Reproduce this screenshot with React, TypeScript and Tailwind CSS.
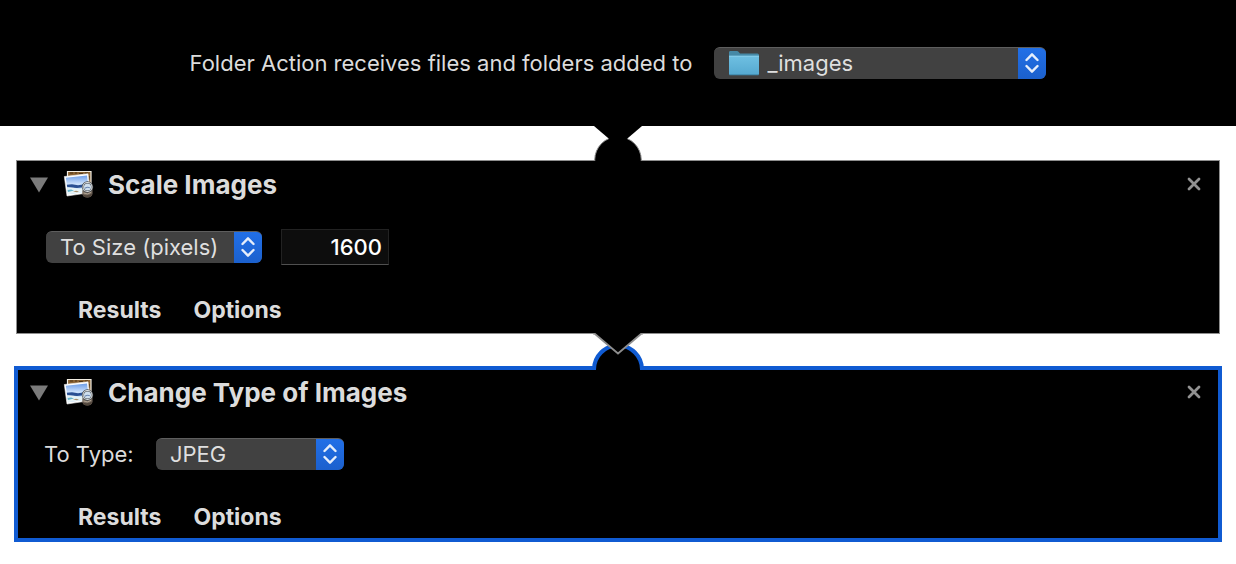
import { useId, useState } from "react";
import type { ReactNode } from "react";

function PopUp({
  id,
  label,
  options,
  className,
  selectClass = "pl-3.5",
  icon,
}: {
  id?: string;
  label?: string;
  options: string[];
  className: string;
  selectClass?: string;
  icon?: ReactNode;
}) {
  return (
    <div
      className={`relative flex h-8 shrink-0 overflow-hidden rounded-md border-t border-[#5e5e5e] bg-[#414141] ${className}`}
    >
      {icon}
      <select
        id={id}
        aria-label={label}
        className={`w-full cursor-default appearance-none bg-transparent pr-8 pb-0.5 text-[22px] leading-7 text-[#dfdfdf] outline-none ${selectClass}`}
      >
        {options.map((o) => (
          <option key={o}>{o}</option>
        ))}
      </select>
      <span className="pointer-events-none absolute -top-px right-0 flex h-8 w-7 items-center justify-center bg-linear-to-b from-[#2270e8] to-[#1b60cd]">
        <svg width="14" height="22" viewBox="0 0 14 22" fill="none" stroke="#e6eefb" strokeWidth="2.4" strokeLinecap="round" strokeLinejoin="round">
          <path d="M1.5 8 7 2.3 12.5 8M1.5 14 7 19.7 12.5 14" />
        </svg>
      </span>
    </div>
  );
}

function FolderIcon() {
  const g = useId();
  return (
    <svg className="pointer-events-none absolute top-[3px] left-3.5" width="32" height="26" viewBox="0 0 32 26">
      <defs>
        <linearGradient id={g} x1="0" y1="0" x2="0" y2="1">
          <stop offset="0" stopColor="#6fc0e2" />
          <stop offset="1" stopColor="#55a9d0" />
        </linearGradient>
      </defs>
      <path d="M1 23V1.400Q1 0 2.400 0H9q1 0 1.700 .9L12 2.600h17.500Q31 2.600 31 4.100V23z" fill="#4689a6" />
      <path d="M1 4.800H31V22.800q0 1.200-1.200 1.200H2.200Q1 24 1 22.800z" fill={`url(#${g})`} />
      <path d="M1 5.300H31" stroke="#86cdea" />
      <path d="M1.500 23.800H30.500" stroke="#3f86a8" />
    </svg>
  );
}

function PreviewIcon() {
  const g = useId();
  return (
    <svg width="32" height="30" viewBox="0 0 32 30" className="shrink-0">
      <defs>
        <linearGradient id={g} x1="0" y1="0" x2="0" y2="1">
          <stop offset="0" stopColor="#6b9ce8" />
          <stop offset="0.45" stopColor="#cbe0fb" />
          <stop offset="1" stopColor="#a9d0f2" />
        </linearGradient>
      </defs>
      <path d="M4.500 1.500H28V20H4.500z" fill="#8a6232" stroke="#f3eee4" strokeWidth="1.200" />
      <path d="M7 3h3M12 3h2M16 3.500h4M22 3h3M26 6v4" stroke="#4e3414" strokeWidth="1.200" />
      <path d="M1.300 6.500 25 3.800 27.500 22.600 4 26z" fill="#fff" stroke="#eee" strokeWidth=".6" />
      <path d="M2.800 7.800 24 5.400 26 21.200 5 24.300z" fill={`url(#${g})`} />
      <path d="M3.800 14.800 9 14.300l6 1 9.800-1.600.4 3L14 18 4.300 17.300z" fill="#2a4f92" />
      <path d="M4.300 17.300 10 17.800l7 1 4-1 1 4L5 24.300z" fill="#e6f2f5" />
      <path d="M4.600 20 8 19.400l3 1-6 1.500z" fill="#66b5cb" />
      <path d="M10 21.500l3-.8 3 .8-2 .7z" fill="#a98f6c" />
      <path d="M19.300 20q5 4 10.200-1v5q-1 3.600-5.200 3.600T19.300 24z" fill="#776b60" />
      <path d="M19.500 24q4.500 3 9.700-.8-.6 4.300-4.700 4.300t-5-3.500z" fill="#51463c" />
      <circle cx="24.500" cy="17" r="4.600" fill="#cfdfee" stroke="#43494e" strokeWidth="2.200" />
      <circle cx="24.500" cy="17" r="4.500" fill="none" stroke="#dfe1e2" strokeWidth="1.100" />
      <path d="M22 18.200q2.500-1.600 4.800-.4" stroke="#6a86b2" strokeWidth="1.100" fill="none" />
      <path d="M20.500 23q4 2 7.500-.6" stroke="#b8aa98" strokeWidth=".9" fill="none" />
    </svg>
  );
}

function Pointer({ outlined }: { outlined?: boolean }) {
  return (
    <svg
      className="pointer-events-none absolute top-full left-1/2 z-10 -translate-x-1/2"
      width="50"
      height="24"
      viewBox="0 0 50 24"
    >
      <path d="M1 0 25 20.500 49 0z" fill="#000" />
      {outlined && <path d="M0 .5H1.500L25 20.500 48.500 .5H50" fill="none" stroke="#8e8e8e" strokeWidth="1.800" />}
    </svg>
  );
}

function Bump({ selected }: { selected?: boolean }) {
  return (
    <svg
      className="pointer-events-none absolute bottom-full left-1/2 -translate-x-1/2"
      width="52"
      height="26"
      viewBox="0 0 52 26"
    >
      {selected ? (
        <circle cx="26" cy="25.500" r="24" fill="#000" stroke="#105bd2" strokeWidth="4" />
      ) : (
        <circle cx="26" cy="25" r="23.300" fill="#000" stroke="#8e8e8e" strokeWidth="1" />
      )}
    </svg>
  );
}

function ActionCard({ title, selected, children }: { title: string; selected?: boolean; children: ReactNode }) {
  const [open, setOpen] = useState(true);
  return (
    <section
      className={`relative bg-black ${
        selected ? "mx-3.5 mt-8 border-4 border-[#105bd2] pb-1.5" : "mx-4 mt-[34px] border border-[#8e8e8e] pb-2"
      }`}
    >
      <Bump selected={selected} />
      <header className={`flex items-center ${selected ? "h-[46px] pr-[17px] pl-3" : "h-12 pr-[18px] pl-[13px]"}`}>
        <button type="button" aria-label="Toggle details" aria-expanded={open} onClick={() => setOpen(!open)}>
          <svg width="18" height="16" viewBox="0 0 18 16" className={open ? "" : "-rotate-90"}>
            <path d="M0 .5H18L9 15.500z" fill="#7b7b7b" />
          </svg>
        </button>
        <span className="ml-[15px]">
          <PreviewIcon />
        </span>
        <h2 className="ml-[13px] flex-1 text-[26px] leading-8 font-bold">{title}</h2>
        <button type="button" aria-label={`Remove ${title}`} className="pb-0.5">
          <svg width="14" height="14" viewBox="0 0 14 14" stroke="#929292" strokeWidth="2.800" strokeLinecap="round">
            <path d="M2 2 12 12M12 2 2 12" />
          </svg>
        </button>
      </header>
      {open && (
        <>
          <div className="mt-5 flex h-9 items-center">{children}</div>
          <footer
            className={`mt-[30px] flex h-[30px] items-center gap-8 text-[23px] font-bold ${
              selected ? "pl-[60px]" : "pl-[61px]"
            }`}
          >
            <button type="button">Results</button>
            <button type="button">Options</button>
          </footer>
        </>
      )}
      {!selected && <Pointer outlined />}
    </section>
  );
}

export default function App() {
  return (
    <main className="min-h-screen bg-white pb-5 font-['Inter',sans-serif] text-[#dcdcdc]">
      <div className="relative flex h-[126px] items-center justify-center gap-[22px] bg-black">
        <label htmlFor="folder" className="text-[22px] leading-8">
          Folder Action receives files and folders added to
        </label>
        <PopUp
          id="folder"
          options={["_images", "Other…"]}
          className="w-[332px]"
          selectClass="pl-[53px]"
          icon={<FolderIcon />}
        />
        <Pointer />
      </div>

      <ActionCard title="Scale Images">
        <PopUp label="Scale mode" options={["To Size (pixels)", "By Percentage"]} className="ml-[29px] w-[216px]" />
        <input
          aria-label="Size"
          defaultValue="1600"
          className="ml-[19px] h-9 w-[108px] border border-[#222] border-b-[#505050] bg-[#0d0d0d] pr-1.5 text-right text-[22px] font-medium text-white outline-none"
        />
      </ActionCard>

      <ActionCard title="Change Type of Images" selected>
        <label htmlFor="type" className="ml-[26px] w-28 text-[22px] leading-8">
          To Type:
        </label>
        <PopUp id="type" options={["JPEG", "PNG", "TIFF"]} className="w-[188px]" />
      </ActionCard>
    </main>
  );
}
